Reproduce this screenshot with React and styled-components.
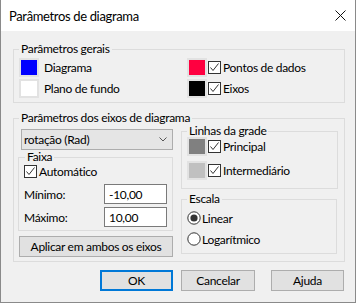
import React from 'react';
import styled, { createGlobalStyle } from 'styled-components';

const FONT = '"Lato", "Noto Sans", sans-serif';

const Global = createGlobalStyle`
  html, body { margin: 0; padding: 0; background: #f0f0f0; }
  body { font-family: ${FONT}; font-size: 12px; letter-spacing: -0.3px; color: #000; }
  * { box-sizing: border-box; }
`;

const Window = styled.div`
  width: 356px;
  height: 303px;
  background: #f0f0f0;
  border: 1px solid #8a8a8a;
  border-top: none;
  display: flex;
  flex-direction: column;
`;

const TitleBar = styled.div`
  height: 31px;
  flex: none;
  background: #fff;
  display: flex;
  align-items: center;
  justify-content: space-between;
  padding: 0 9px 0 8px;
`;

const Title = styled.div`
  font-size: 13px;
  letter-spacing: -0.35px;
  line-height: 16px;
  color: #000;
`;

const Content = styled.div`
  padding: 18px 10px 0 12px;
  display: flex;
  flex-direction: column;
`;

const Group = styled.div`
  border: 1px solid #dcdcdc;
  margin-top: ${(p) => p.$mt || 0}px;
  padding: ${(p) => p.$pad || '0'};
  display: flex;
  flex-direction: column;
  ${(p) => (p.$w ? `width: ${p.$w}px;` : '')}
`;

const Legend = styled.div`
  margin: -8px 0 ${(p) => p.$mb || 0}px ${(p) => p.$ml || 5}px;
  height: 14px;
  line-height: 14px;
  padding: 0 2px;
  width: fit-content;
  background: #f0f0f0;
  white-space: nowrap;
`;

const GeneralGrid = styled.div`
  display: grid;
  grid-template-columns: 168px 1fr;
  grid-auto-rows: 19px;
  row-gap: 2px;
  margin-top: 2px;
  padding-left: 5px;
`;

const Item = styled.div`
  display: flex;
  align-items: center;
  height: 19px;
`;

const Swatch = styled.span`
  width: 20px;
  height: 19px;
  flex: none;
  border: 2px solid #e2e2e2;
  background: ${(p) => p.$color};
`;

const ItemText = styled.span`
  margin-left: ${(p) => p.$ml ?? 5}px;
  white-space: nowrap;
`;

const CheckBox = styled.span`
  width: 13px;
  height: 13px;
  flex: none;
  margin-left: ${(p) => p.$ml || 0}px;
  border: 1px solid #333;
  background: #fff;
  display: flex;
  svg { display: block; }
`;

const Check = ({ ml }) => (
  <CheckBox $ml={ml}>
    <svg width="11" height="11" viewBox="0 0 11 11">
      <polyline points="1.5,5.5 4,8.5 9.5,1.5" fill="none" stroke="#333" strokeWidth="1" />
    </svg>
  </CheckBox>
);

const Columns = styled.div`
  display: grid;
  grid-template-columns: 155px 157px;
  column-gap: 8px;
  padding-left: 4px;
`;

const Col = styled.div`
  display: flex;
  flex-direction: column;
`;

const Select = styled.div`
  margin: 4px 0 0 3px;
  width: 152px;
  height: 21px;
  background: #e5e5e5;
  border: 1px solid #adadad;
  display: flex;
  align-items: center;
  justify-content: space-between;
  padding: 0 5px 0 2px;
`;

const Chevron = () => (
  <svg width="8" height="5" viewBox="0 0 8 5">
    <polyline points="0.5,0.5 4,4 7.5,0.5" fill="none" stroke="#555" strokeWidth="1" />
  </svg>
);

const AutoRow = styled.div`
  display: flex;
  align-items: center;
  height: 14px;
  padding-left: 5px;
`;

const FieldRow = styled.div`
  display: flex;
  align-items: center;
  justify-content: space-between;
  margin-top: ${(p) => p.$mt}px;
  padding: 0 5px 0 5px;
`;

const Input = styled.div`
  width: 63px;
  height: 20px;
  background: #fff;
  border: 1px solid #7a7a7a;
  display: flex;
  align-items: center;
  padding-left: 4px;
`;

const WideButton = styled.div`
  margin: 5px 0 0 1px;
  width: 154px;
  height: 21px;
  background: #e1e1e1;
  border: 1px solid #adadad;
  display: flex;
  align-items: center;
  justify-content: center;
`;

const SwatchRows = styled.div`
  display: flex;
  flex-direction: column;
  gap: 5px;
  padding-left: 5px;
`;

const RadioRows = styled.div`
  display: flex;
  flex-direction: column;
  gap: 5px;
  margin-top: 4px;
  padding-left: 5px;
`;

const RadioItem = styled.div`
  display: flex;
  align-items: center;
  height: 16px;
  svg { display: block; flex: none; }
`;

const Radio = ({ on }) => (
  <svg width="14" height="14" viewBox="0 0 14 14">
    <circle cx="7" cy="7" r="6.2" fill="#fff" stroke="#333" strokeWidth="1" />
    {on && <circle cx="7" cy="7" r="3.6" fill="#333" />}
  </svg>
);

const ButtonRow = styled.div`
  display: flex;
  justify-content: flex-end;
  margin-top: 8px;
  padding-right: 1px;
`;

const Button = styled.div`
  width: ${(p) => p.$w || 73}px;
  height: 21px;
  margin-left: ${(p) => p.$ml || 0}px;
  background: #e1e1e1;
  border: ${(p) => (p.$default ? '2px solid #0078d7' : '1px solid #adadad')};
  display: flex;
  align-items: center;
  justify-content: center;
`;

export default function App() {
  return (
    <>
      <Global />
      <Window>
        <TitleBar>
          <Title>Parâmetros de diagrama</Title>
          <svg width="11" height="11" viewBox="0 0 11 11">
            <path d="M0.5 0.5 L10.5 10.5 M10.5 0.5 L0.5 10.5" stroke="#111" strokeWidth="1" fill="none" />
          </svg>
        </TitleBar>
        <Content>
          <Group $pad="0 0 4px 0">
            <Legend>Parâmetros gerais</Legend>
            <GeneralGrid>
              <Item>
                <Swatch $color="#0000ff" />
                <ItemText>Diagrama</ItemText>
              </Item>
              <Item>
                <Swatch $color="#ff0040" />
                <Check ml={1} />
                <ItemText $ml={2}>Pontos de dados</ItemText>
              </Item>
              <Item>
                <Swatch $color="#ffffff" />
                <ItemText>Plano de fundo</ItemText>
              </Item>
              <Item>
                <Swatch $color="#000000" />
                <Check ml={1} />
                <ItemText $ml={2}>Eixos</ItemText>
              </Item>
            </GeneralGrid>
          </Group>

          <Group $mt={15} $pad="0 0 4px 0">
            <Legend>Parâmetros dos eixos de diagrama</Legend>
            <Columns>
              <Col>
                <Select>
                  <span>rotação (Rad)</span>
                  <Chevron />
                </Select>
                <Group $mt={7} $pad="0 0 3px 0">
                  <Legend $ml={6}>Faixa</Legend>
                  <AutoRow>
                    <Check />
                    <ItemText $ml={2}>Automático</ItemText>
                  </AutoRow>
                  <FieldRow $mt={6}>
                    <span>Mínimo:</span>
                    <Input>-10,00</Input>
                  </FieldRow>
                  <FieldRow $mt={3}>
                    <span>Máximo:</span>
                    <Input>10,00</Input>
                  </FieldRow>
                </Group>
                <WideButton>Aplicar em ambos os eixos</WideButton>
              </Col>
              <Col>
                <Group $mt={6} $pad="0 0 8px 0">
                  <Legend $ml={5} $mb={-1}>Linhas da grade</Legend>
                  <SwatchRows>
                    <Item>
                      <Swatch $color="#808080" />
                      <Check ml={1} />
                      <ItemText $ml={2}>Principal</ItemText>
                    </Item>
                    <Item>
                      <Swatch $color="#c0c0c0" />
                      <Check ml={1} />
                      <ItemText $ml={2}>Intermediário</ItemText>
                    </Item>
                  </SwatchRows>
                </Group>
                <Group $mt={10} $pad="0 0 6px 0" $w={156}>
                  <Legend $ml={5}>Escala</Legend>
                  <RadioRows>
                    <RadioItem>
                      <Radio on />
                      <ItemText $ml={1}>Linear</ItemText>
                    </RadioItem>
                    <RadioItem>
                      <Radio />
                      <ItemText $ml={1}>Logarítmico</ItemText>
                    </RadioItem>
                  </RadioRows>
                </Group>
              </Col>
            </Columns>
          </Group>

          <ButtonRow>
            <Button $default>OK</Button>
            <Button $w={74} $ml={8}>Cancelar</Button>
            <Button $ml={16}>Ajuda</Button>
          </ButtonRow>
        </Content>
      </Window>
    </>
  );
}
